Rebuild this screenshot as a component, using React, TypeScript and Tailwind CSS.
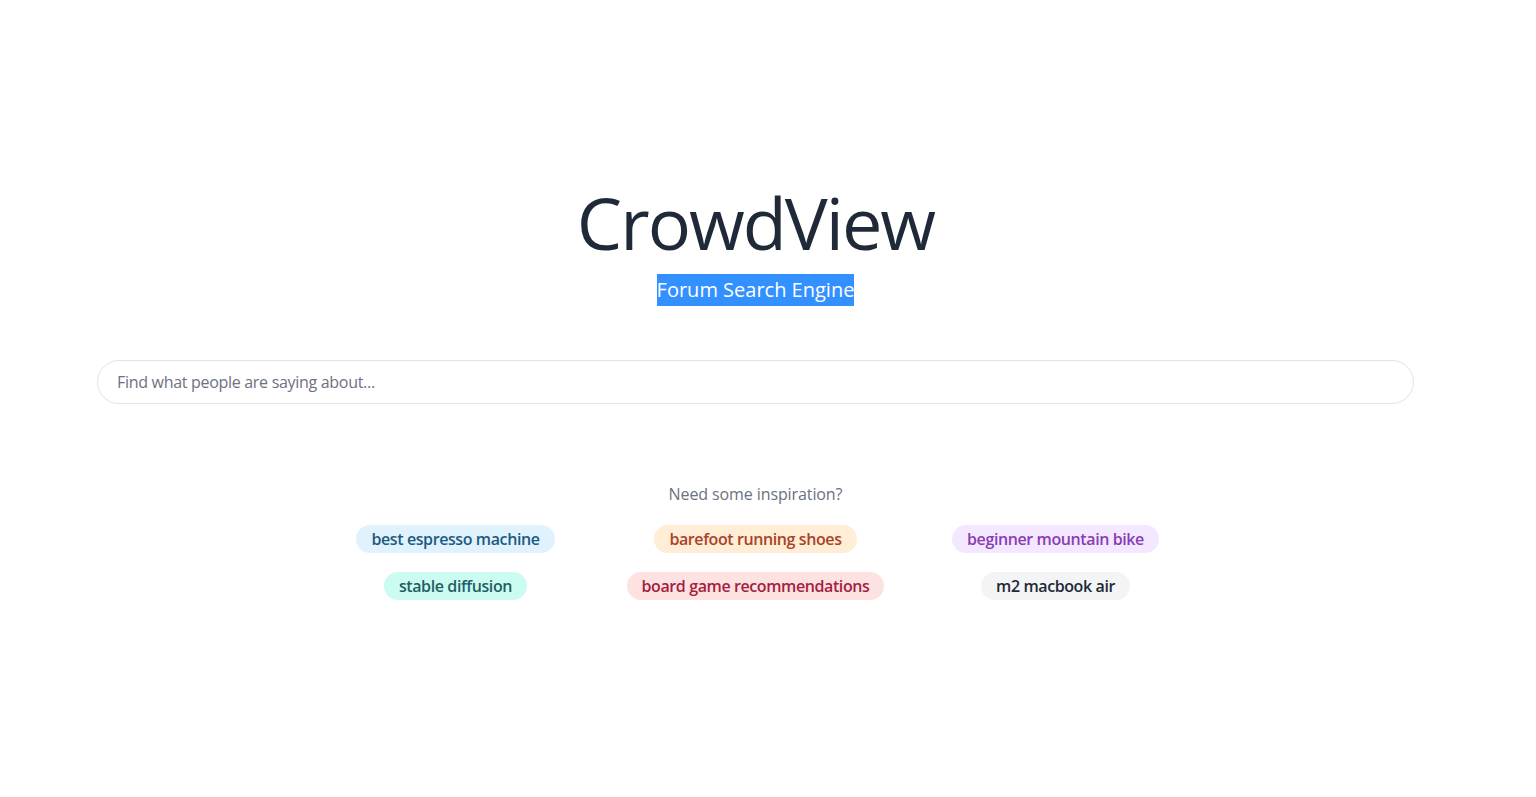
import React from "react";

const chips = [
  { label: "best espresso machine", cls: "bg-[#e0f2fe] text-[#1e5a80]" },
  { label: "barefoot running shoes", cls: "bg-[#ffedd5] text-[#a8432a]" },
  { label: "beginner mountain bike", cls: "bg-[#f3e8ff] text-[#8a3cb3]" },
  { label: "stable diffusion", cls: "bg-[#ccfbf1] text-[#1f5f63]" },
  { label: "board game recommendations", cls: "bg-[#fee2e2] text-[#a3213f]" },
  { label: "m2 macbook air", cls: "bg-[#f3f4f6] text-[#1f2937]" },
];

export default function App() {
  return (
    <div
      className="min-h-[797px] w-[1511px] bg-white"
      style={{ fontFamily: '"Open Sans", "Noto Sans", sans-serif' }}
    >
      <div className="flex flex-col items-center pt-[186px]">
        <h1 className="text-[72px] leading-[72px] text-[#1f2937] tracking-[-2px]">CrowdView</h1>
        <div className="mt-[16px] h-[32px] flex items-center">
          <span className="bg-[#3390ff] text-white text-[20px] leading-[32px] tracking-[0px]">
            Forum Search Engine
          </span>
        </div>
        <div className="mt-[54px] w-full px-[97px]">
          <input
            type="text"
            placeholder="Find what people are saying about..."
            className="w-full h-[44px] rounded-full border border-[#e2e3e8] px-[19px] text-[16px] text-[#374151] placeholder:text-[#6b7280] outline-none tracking-[-0.3px]"
          />
        </div>
        <p className="mt-[78px] text-[16px] leading-[24px] text-[#6b7280] tracking-[-0.1px]">
          Need some inspiration?
        </p>
        <div className="mt-[19px] grid grid-cols-3 w-[900px] gap-y-[19px] justify-items-center">
          {chips.map((c) => (
            <span
              key={c.label}
              className={`rounded-full px-[15px] h-[28px] flex items-center text-[16px] font-semibold tracking-[-0.4px] ${c.cls}`}
            >
              {c.label}
            </span>
          ))}
        </div>
      </div>
    </div>
  );
}
